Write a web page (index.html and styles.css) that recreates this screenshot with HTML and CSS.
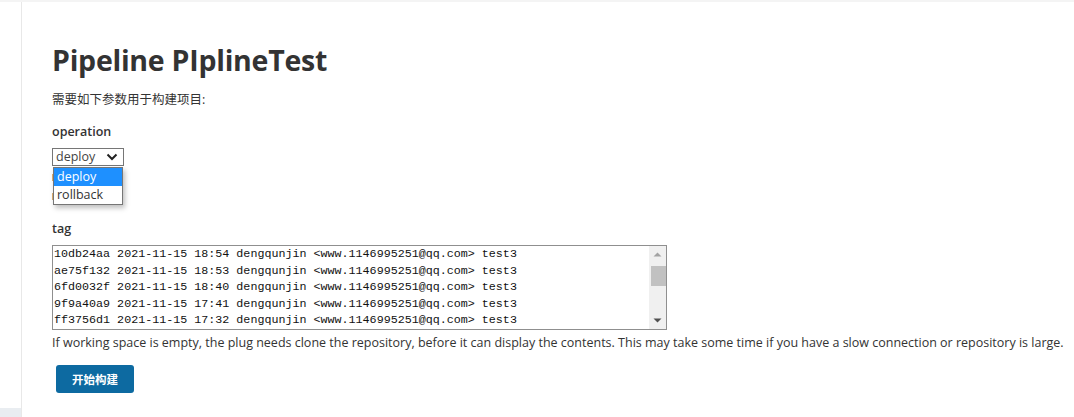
FILE: index.html
```html
<!DOCTYPE html>
<html lang="zh-CN">
<head>
<meta charset="utf-8">
<title>Pipeline PIplineTest</title>
<link rel="stylesheet" href="styles.css">
</head>
<body>
<div class="topbar"></div>
<div class="layout">
  <aside class="sidebar"><div class="sidebar-foot"></div></aside>
  <main class="main">
    <h1 class="title">Pipeline PIplineTest</h1>
    <p class="intro">需要如下参数用于构建项目:</p>

    <div class="param">
      <div class="param-name">operation</div>
      <div class="select-wrap">
        <div class="select">
          <span class="select-value">deploy</span>
          <svg class="chevron" width="12" height="8" viewBox="0 0 12 8"><path d="M1.5 1.5 L6 6 L10.5 1.5" fill="none" stroke="#222" stroke-width="2"/></svg>
        </div>
        <div class="select-desc"><span class="desc-mark"></span><span class="desc-mark"></span></div>
        <ul class="dropdown">
          <li class="option selected">deploy</li>
          <li class="option">rollback</li>
        </ul>
      </div>
    </div>

    <div class="param tag-param">
      <div class="param-name">tag</div>
      <div class="listbox">
        <div class="list-lines">
          <div>10db24aa 2021-11-15 18:54 dengqunjin &lt;www.1146995251@qq.com&gt; test3</div>
          <div>ae75f132 2021-11-15 18:53 dengqunjin &lt;www.1146995251@qq.com&gt; test3</div>
          <div>6fd0032f 2021-11-15 18:40 dengqunjin &lt;www.1146995251@qq.com&gt; test3</div>
          <div>9f9a40a9 2021-11-15 17:41 dengqunjin &lt;www.1146995251@qq.com&gt; test3</div>
          <div>ff3756d1 2021-11-15 17:32 dengqunjin &lt;www.1146995251@qq.com&gt; test3</div>
        </div>
        <div class="scrollbar">
          <svg class="arrow" width="17" height="17" viewBox="0 0 17 17"><path d="M4.5 10.5 L8.5 6.5 L12.5 10.5 Z" fill="#a3a3a3"/></svg>
          <div class="track"><div class="thumb"></div></div>
          <svg class="arrow" width="17" height="17" viewBox="0 0 17 17"><path d="M4.5 6.5 L8.5 10.5 L12.5 6.5 Z" fill="#505050"/></svg>
        </div>
      </div>
      <div class="param-desc">If working space is empty, the plug needs clone the repository, before it can display the contents. This may take some time if you have a slow connection or repository is large.</div>
    </div>

    <button class="build-btn" type="button">开始构建</button>
  </main>
</div>
</body>
</html>
```
FILE: styles.css
```css
* { box-sizing: border-box; }
html, body { margin: 0; padding: 0; }
body {
  font-family: "Open Sans", "Noto Sans CJK SC", sans-serif;
  color: #333;
  background: #fff;
  width: 1074px;
  height: 417px;
  overflow: hidden;
}
.topbar { height: 2px; background: #f4f4f4; }
.layout { display: flex; height: 415px; }
.sidebar {
  width: 22px;
  border-right: 1px solid #e8e8e8;
  display: flex;
  flex-direction: column;
  justify-content: flex-end;
}
.sidebar-foot { height: 9px; background: #e9edf1; }
.main { flex: 1; padding: 38px 0 0 30px; }
.title {
  margin: 0;
  font-size: 28.5px;
  font-weight: 700;
  line-height: 40px;
  color: #333;
  letter-spacing: -0.25px;
}
.intro {
  margin: 11px 0 0;
  font-size: 12.5px;
  line-height: 18px;
}
.param { margin-top: 14px; }
.param-name {
  font-size: 12.5px;
  font-weight: 600;
  line-height: 18px;
}
.select-wrap { position: relative; margin-top: 7px; height: 66px; }
.select {
  width: 72px;
  height: 18px;
  border: 1px solid #767676;
  display: flex;
  align-items: center;
  justify-content: space-between;
  padding: 0 5px 0 3px;
  font-size: 12.5px;
  line-height: 16px;
  color: #444;
}
.chevron { display: block; }
.select-desc {
  display: flex;
  flex-direction: column;
  gap: 12px;
  padding: 8px 0 0 0;
}
.desc-mark { display: block; width: 2px; height: 7px; background: #e0b070; }
.dropdown {
  position: absolute;
  left: 1px;
  top: 19px;
  width: 70px;
  margin: 0;
  padding: 0;
  list-style: none;
  border: 1px solid #767676;
  background: #fff;
  box-shadow: 2px 3px 5px rgba(0,0,0,0.25);
}
.option {
  height: 18px;
  line-height: 18px;
  padding-left: 3px;
  font-size: 12.5px;
  color: #333;
}
.option.selected { background: #1e90ff; color: #fff; }
.tag-param { margin-top: 6px; }
.listbox {
  margin-top: 7px;
  width: 615px;
  height: 85px;
  border: 1px solid #8f8f8f;
  display: flex;
}
.list-lines {
  flex: 1;
  padding: 0 0 0 1px;
  font-family: "Liberation Mono", monospace;
  font-size: 11.7px;
  line-height: 16.5px;
  color: #111;
  white-space: nowrap;
  overflow: hidden;
}
.scrollbar {
  width: 17px;
  background: #f0f0f0;
  display: flex;
  flex-direction: column;
}
.arrow { display: block; flex: none; }
.track { flex: 1; padding: 3px 0 0 2px; }
.thumb { width: 15px; height: 20px; background: #c1c1c1; }
.param-desc {
  margin-top: 4px;
  font-size: 12.5px;
  line-height: 18px;
  white-space: nowrap;
}
.build-btn {
  display: block;
  margin: 13px 0 0 4px;
  width: 78px;
  height: 28px;
  border: none;
  border-radius: 3px;
  background: #0d6aa1;
  color: #fff;
  font-family: "Noto Sans CJK SC", sans-serif;
  font-weight: 700;
  font-size: 11.5px;
  padding: 0;
}
```
